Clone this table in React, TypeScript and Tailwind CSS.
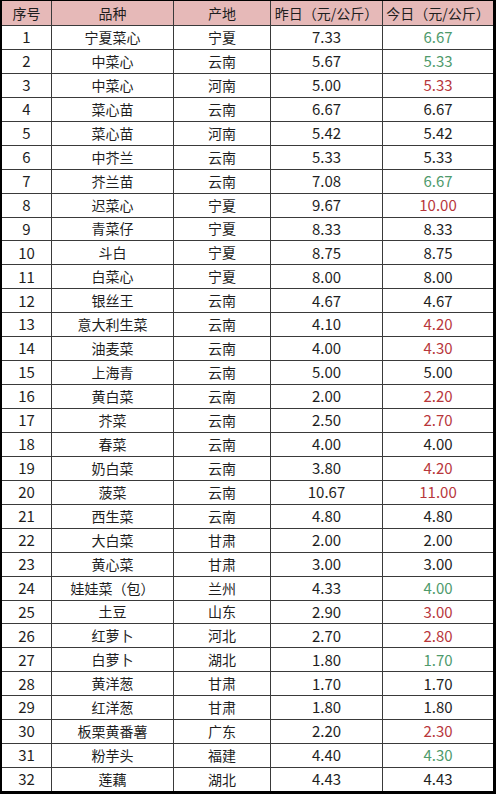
import React from "react";

type Row = [number, string, string, string, string, "" | "g" | "r"];

const rows: Row[] = [
  [1, "宁夏菜心", "宁夏", "7.33", "6.67", "g"],
  [2, "中菜心", "云南", "5.67", "5.33", "g"],
  [3, "中菜心", "河南", "5.00", "5.33", "r"],
  [4, "菜心苗", "云南", "6.67", "6.67", ""],
  [5, "菜心苗", "河南", "5.42", "5.42", ""],
  [6, "中芥兰", "云南", "5.33", "5.33", ""],
  [7, "芥兰苗", "云南", "7.08", "6.67", "g"],
  [8, "迟菜心", "宁夏", "9.67", "10.00", "r"],
  [9, "青菜仔", "宁夏", "8.33", "8.33", ""],
  [10, "斗白", "宁夏", "8.75", "8.75", ""],
  [11, "白菜心", "宁夏", "8.00", "8.00", ""],
  [12, "银丝王", "云南", "4.67", "4.67", ""],
  [13, "意大利生菜", "云南", "4.10", "4.20", "r"],
  [14, "油麦菜", "云南", "4.00", "4.30", "r"],
  [15, "上海青", "云南", "5.00", "5.00", ""],
  [16, "黄白菜", "云南", "2.00", "2.20", "r"],
  [17, "芥菜", "云南", "2.50", "2.70", "r"],
  [18, "春菜", "云南", "4.00", "4.00", ""],
  [19, "奶白菜", "云南", "3.80", "4.20", "r"],
  [20, "菠菜", "云南", "10.67", "11.00", "r"],
  [21, "西生菜", "云南", "4.80", "4.80", ""],
  [22, "大白菜", "甘肃", "2.00", "2.00", ""],
  [23, "黄心菜", "甘肃", "3.00", "3.00", ""],
  [24, "娃娃菜（包）", "兰州", "4.33", "4.00", "g"],
  [25, "土豆", "山东", "2.90", "3.00", "r"],
  [26, "红萝卜", "河北", "2.70", "2.80", "r"],
  [27, "白萝卜", "湖北", "1.80", "1.70", "g"],
  [28, "黄洋葱", "甘肃", "1.70", "1.70", ""],
  [29, "红洋葱", "甘肃", "1.80", "1.80", ""],
  [30, "板栗黄番薯", "广东", "2.20", "2.30", "r"],
  [31, "粉芋头", "福建", "4.40", "4.30", "g"],
  [32, "莲藕", "湖北", "4.43", "4.43", ""],
];

const grid = "grid grid-cols-[50px_122px_97px_112px_110px]";
const cell = "flex items-center justify-center border-r border-[#3a3a3a]";

export default function App() {
  return (
    <div
      className="w-[496px] h-[794px] bg-white flex flex-col border-l-2 border-t border-r-[3px] border-b-[3px] border-black text-[15px] text-[#1e1e1e]"
      style={{ fontFamily: '"Noto Sans CJK SC", "Liberation Sans", sans-serif' }}
    >
      {/* header */}
      <div className={`${grid} h-[25px] shrink-0 bg-[#e6b9b8] border-b border-[#3a3a3a] text-[14px]`}>
        <div className={cell}>序号</div>
        <div className={cell}>品种</div>
        <div className={cell}>产地</div>
        <div className={cell}>昨日（元/公斤）</div>
        <div className="flex items-center justify-center">今日（元/公斤）</div>
      </div>
      {rows.map(([no, name, place, y, t, c], i) => (
        <div
          key={no}
          className={`${grid} flex-1 ${i < rows.length - 1 ? "border-b border-[#3a3a3a]" : ""}`}
        >
          <div className={cell}>{no}</div>
          <div className={`${cell} text-[14px]`}>{name}</div>
          <div className={`${cell} text-[14px]`}>{place}</div>
          <div className={cell}>{y}</div>
          <div
            className={`flex items-center justify-center ${
              c === "g" ? "text-[#4e9a6c]" : c === "r" ? "text-[#b8373c]" : ""
            }`}
          >
            {t}
          </div>
        </div>
      ))}
    </div>
  );
}
